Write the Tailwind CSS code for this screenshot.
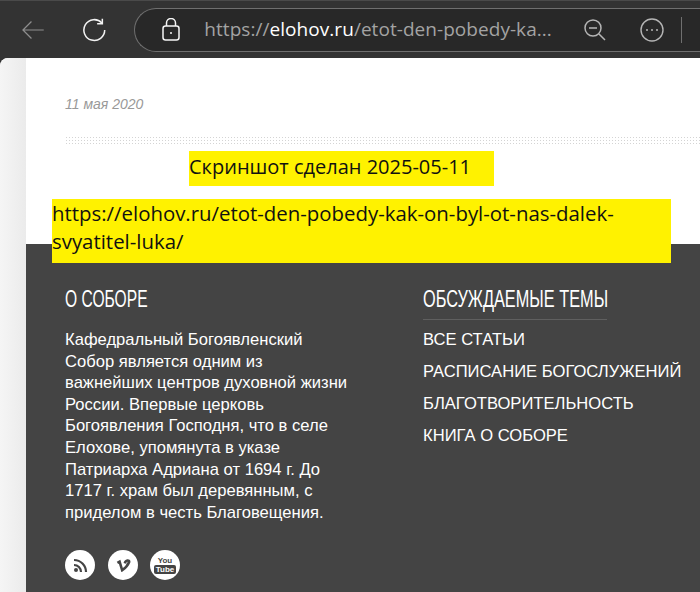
<!DOCTYPE html>
<html lang="ru">
<head>
    <meta charset="UTF-8">
    <title>Собор</title>
    <script src="https://cdn.jsdelivr.net/npm/@tailwindcss/browser@4"></script>
</head>
<body class="w-[700px] h-[592px] overflow-hidden bg-[#333333] font-['Liberation_Sans',sans-serif]">
    <!-- browser toolbar -->
    <div class="h-[58px] flex items-center bg-[#333333] border-t border-[#4a4a4a]">
        <svg class="ml-[22px] w-[23px] h-[20px]" viewBox="0 0 23 20" fill="none" stroke="#8f8f8f" stroke-width="1.3"><path d="M1 10h22M10 1 1 10l9 9"/></svg>
        <svg class="ml-[38px] w-[26px] h-[26px]" viewBox="0 0 26 26" fill="none" stroke="#f2f2f2" stroke-width="1.6"><path d="M21 5.500A11 11 0 1 0 24 13"/><path d="M21.500 1v5.500H16"/></svg>
        <div class="ml-[26px] w-[600px] h-[44px] flex items-center translate-x-[2px] rounded-l-[22px] bg-[#282828] border border-[#6f6f6f] border-r-0">
            <svg class="ml-[27px] w-[18px] h-[23px]" viewBox="0 0 18 23" fill="none" stroke="#f5f5f5" stroke-width="1.5"><rect x="1" y="8" width="16" height="14" rx="2.500"/><path d="M4.500 8V5a4.500 4.500 0 0 1 9 0v3"/><circle cx="9" cy="15" r="1" fill="#f5f5f5" stroke="none"/></svg>
            <div class="ml-[24px] w-[350px] text-[19px] tracking-[0.05px] text-[#a3a3a3] whitespace-nowrap font-['Open_Sans',sans-serif]">https://<span class="text-white">elohov.ru</span>/etot-den-pobedy-ka...</div>
            <svg class="ml-[30px] w-[22px] h-[22px]" viewBox="0 0 22 22" fill="none" stroke="#b5b5b5" stroke-width="1.5"><circle cx="9" cy="9" r="8"/><path d="M5 9h8M15 15l6 6"/></svg>
            <svg class="ml-[34px] w-[24px] h-[24px]" viewBox="0 0 24 24" fill="none" stroke="#b5b5b5" stroke-width="1.4"><circle cx="12" cy="12" r="11"/><circle cx="7" cy="12" r="1" fill="#b5b5b5" stroke="none"/><circle cx="12" cy="12" r="1" fill="#b5b5b5" stroke="none"/><circle cx="17" cy="12" r="1" fill="#b5b5b5" stroke="none"/></svg>
            <div class="ml-[17px] w-px h-[26px] bg-[#6f6f6f]"></div>
        </div>
    </div>

    <!-- page -->
    <div class="h-[534px] flex bg-white rounded-tl-[8px] overflow-hidden">
        <div class="w-[26px] shrink-0 bg-gradient-to-r from-[#f5f5f5] to-[#ebebeb]"></div>
        <div class="flex-1 flex flex-col">
            <div class="h-[186px] pl-[39px]">
                <p class="pt-[38px] text-[14px] leading-[16px] italic text-[#999999]">11 мая 2020</p>
                <div class="mt-[24px] h-[10px] bg-[radial-gradient(#d4d4d4_1px,transparent_1px)] bg-[length:3px_3px]"></div>
                <div class="ml-[124px] mt-[5px] w-[305px] h-[35px] bg-[#fff200] text-[20px] leading-[32px] text-[#111111] font-['Open_Sans',sans-serif] whitespace-nowrap">Скриншот сделан 2025-05-11</div>
            </div>
            <div class="relative bg-[#444444] flex-1 text-white">
                <div class="absolute left-[26px] top-[-45px] w-[619px] h-[64px] bg-[#fff200] text-[20.4px] leading-[28px] text-[#111111] font-['Open_Sans',sans-serif] whitespace-nowrap">https://elohov.ru/etot-den-pobedy-kak-on-byl-ot-nas-dalek-<br>svyatitel-luka/</div>
                <div class="flex pt-[43px] pl-[39px]">
                    <div class="w-[358px] shrink-0">
                        <h3 class="text-[24px] leading-[24px] whitespace-nowrap origin-left scale-x-[0.65]">О СОБОРЕ</h3>
                        <p class="mt-[18px] text-[16.6px] leading-[21.6px] whitespace-nowrap">Кафедральный Богоявленский<br>Собор является одним из<br>важнейших центров духовной жизни<br>России. Впервые церковь<br>Богоявления Господня, что в селе<br>Елохове, упомянута в указе<br>Патриарха Адриана от 1694 г. До<br>1717 г. храм был деревянным, с<br>приделом в честь Благовещения.</p>
                        <div class="mt-[27px] flex">
                            <span class="w-[30px] h-[30px] rounded-full bg-white flex items-center justify-center">
                                <svg class="w-[15px] h-[15px]" viewBox="0 0 15 15" fill="none" stroke="#444444" stroke-width="2.200"><path d="M1 2a12 12 0 0 1 12 12M1 7a7 7 0 0 1 7 7"/><circle cx="3" cy="12" r="2" fill="#444444" stroke="none"/></svg>
                            </span>
                            <span class="ml-[13px] w-[30px] h-[30px] rounded-full bg-white flex items-center justify-center">
                                <svg class="w-[15px] h-[13px]" viewBox="0 0 17 15" fill="none" stroke="#444444" stroke-width="3"><path d="M1.500 4.500 4 3l3 10c3-2 7-7 8-9.500C15.500 1 11 1 10 5"/></svg>
                            </span>
                            <span class="ml-[12px] w-[30px] h-[30px] rounded-full bg-white flex flex-col items-center justify-center text-[#444444] font-bold text-[8px] leading-[9px]">
                                <span>You</span><span class="px-[2px] bg-[#444444] text-white rounded-[2px]">Tube</span>
                            </span>
                        </div>
                    </div>
                    <div class="flex-1">
                        <div class="w-[184px] pb-[8px] border-b border-[#5f5f5f]">
                            <h3 class="text-[24px] leading-[24px] whitespace-nowrap origin-left scale-x-[0.68]">ОБСУЖДАЕМЫЕ ТЕМЫ</h3>
                        </div>
                        <ul class="mt-[4px] text-[16.6px] leading-[32px] whitespace-nowrap">
                            <li>ВСЕ СТАТЬИ</li>
                            <li>РАСПИСАНИЕ БОГОСЛУЖЕНИЙ</li>
                            <li>БЛАГОТВОРИТЕЛЬНОСТЬ</li>
                            <li>КНИГА О СОБОРЕ</li>
                        </ul>
                    </div>
                </div>
            </div>
        </div>
    </div>
</body>
</html>
